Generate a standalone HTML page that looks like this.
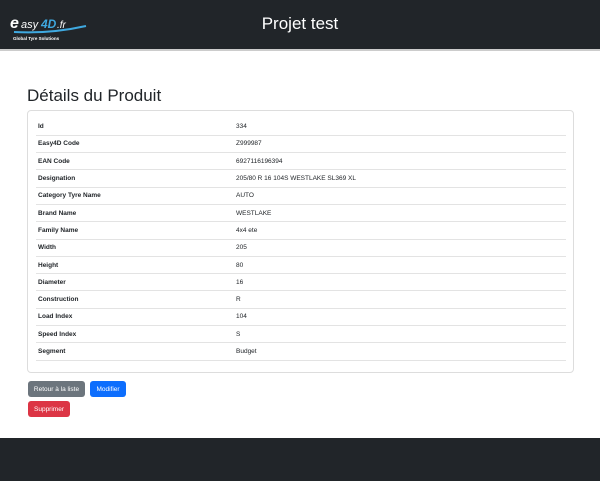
<!DOCTYPE html>
<html><head><meta charset="utf-8"><style>
*{margin:0;padding:0;box-sizing:border-box}
body{width:600px;height:481px;background:#fff;font-family:"Liberation Sans",sans-serif;position:relative;overflow:hidden}
.hdr{position:absolute;left:0;top:0;width:600px;height:51px;background:#212529;border-bottom:2px solid #ccc}
.hdr h1{position:absolute;left:0;width:600px;top:14px;text-align:center;color:#fff;font-weight:normal;font-size:17px}
.logo{position:absolute;left:10px;top:10px}
h2{position:absolute;left:27px;top:86px;font-weight:normal;font-size:17px;color:#212529}
.card{position:absolute;left:27px;top:110px;width:547px;height:263px;border:1px solid #ddd;border-radius:4px}
table{position:absolute;left:8px;top:7px;width:530px;border-collapse:collapse;font-size:6.5px;color:#212529}
td{height:17.3px;border-bottom:1px solid #e3e3e3;padding-left:2px}
td:first-child{font-weight:bold;width:198px}
.b{position:absolute;height:16px;border-radius:3px;color:#fff;font-size:6.5px;display:flex;align-items:center;justify-content:center}
.ftr{position:absolute;left:0;top:438px;width:600px;height:43px;background:#212529}
</style></head><body>
<div class="hdr">
<svg class="logo" width="80" height="34" viewBox="0 0 80 34">
<text x="0" y="18" fill="#fff" font-family="Liberation Sans" font-style="italic" font-weight="bold" font-size="16">e</text>
<text x="11" y="18" fill="#fff" font-family="Liberation Sans" font-style="italic" font-size="11">asy</text>
<text x="31" y="18" fill="#3fa9e0" font-family="Liberation Sans" font-style="italic" font-weight="bold" font-size="12">4D</text>
<text x="47" y="18" fill="#fff" font-family="Liberation Sans" font-style="italic" font-size="10">.fr</text>
<path d="M4 22 Q40 24 76 16" stroke="#3fa9e0" stroke-width="2" fill="none"/>
<text x="3" y="30" fill="#fff" font-family="Liberation Sans" font-size="4.5" font-weight="bold">Global Tyre Solutions</text>
</svg>
<h1>Projet test</h1>
</div>
<h2>Détails du Produit</h2>
<div class="card"><table>
<tr><td>Id</td><td>334</td></tr>
<tr><td>Easy4D Code</td><td>Z999987</td></tr>
<tr><td>EAN Code</td><td>6927116196394</td></tr>
<tr><td>Designation</td><td>205/80 R 16 104S WESTLAKE SL369 XL</td></tr>
<tr><td>Category Tyre Name</td><td>AUTO</td></tr>
<tr><td>Brand Name</td><td>WESTLAKE</td></tr>
<tr><td>Family Name</td><td>4x4 ete</td></tr>
<tr><td>Width</td><td>205</td></tr>
<tr><td>Height</td><td>80</td></tr>
<tr><td>Diameter</td><td>16</td></tr>
<tr><td>Construction</td><td>R</td></tr>
<tr><td>Load Index</td><td>104</td></tr>
<tr><td>Speed Index</td><td>S</td></tr>
<tr><td>Segment</td><td>Budget</td></tr>
</table></div>
<div class="b" style="left:28px;top:381px;width:57px;background:#6c757d">Retour à la liste</div>
<div class="b" style="left:90px;top:381px;width:36px;background:#0d6efd">Modifier</div>
<div class="b" style="left:28px;top:401px;width:42px;background:#dc3545">Supprimer</div>
<div class="ftr"></div>
</body></html>
